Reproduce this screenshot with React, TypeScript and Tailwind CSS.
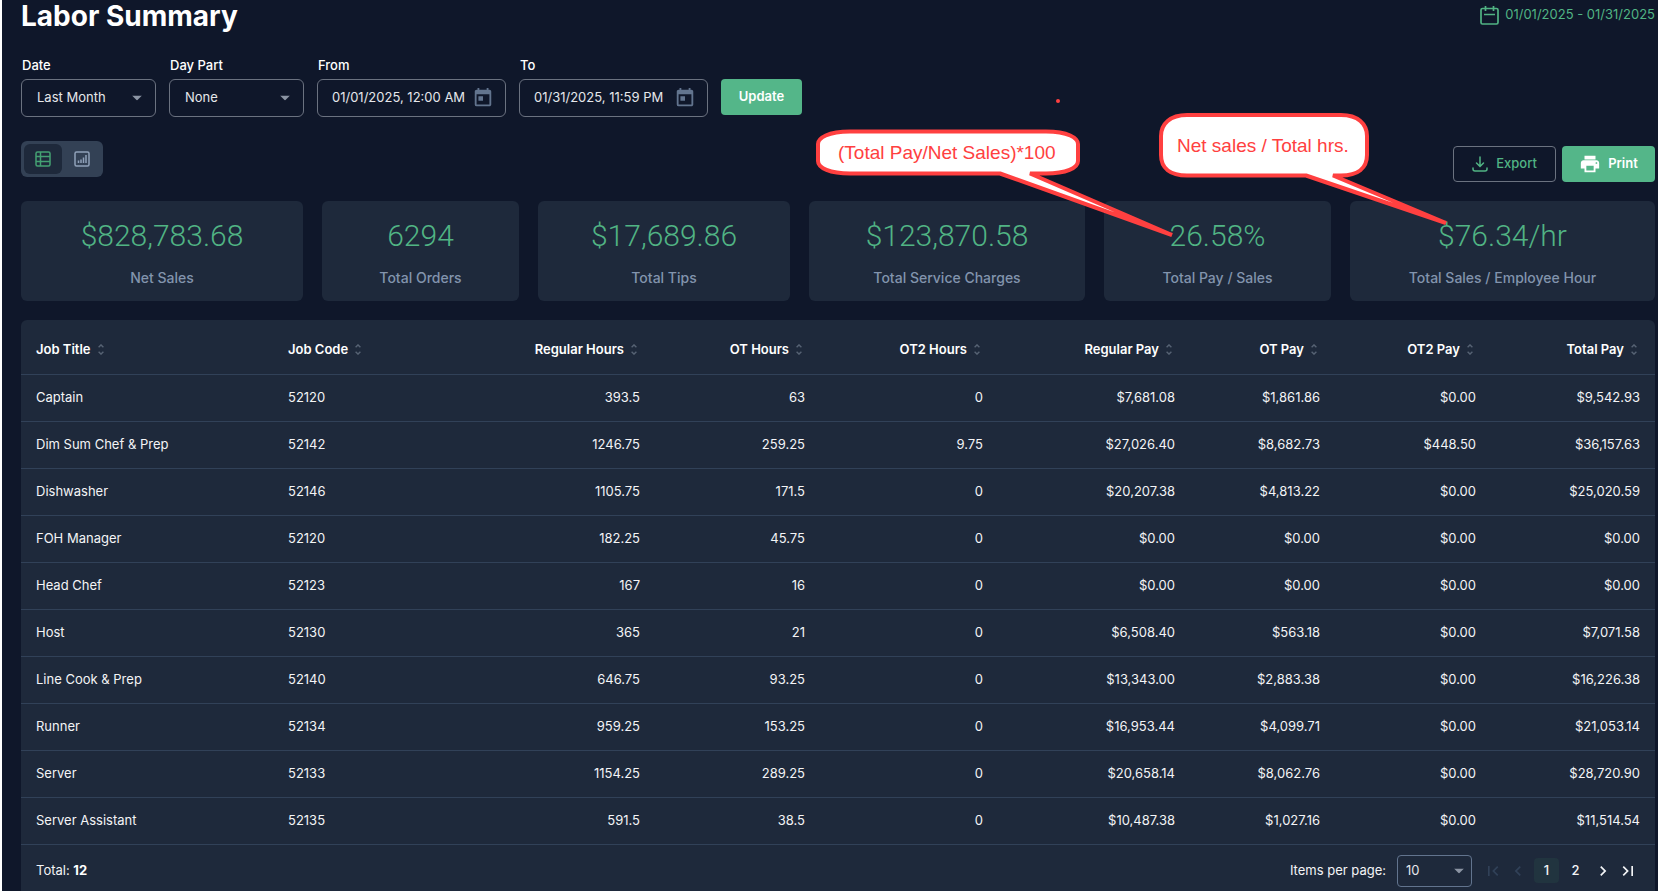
import { useState } from 'react'
import { MdToday, MdPrint, MdChevronLeft, MdChevronRight, MdFirstPage, MdLastPage } from 'react-icons/md'

const STATS = [
  { value: '$828,783.68', label: 'Net Sales' },
  { value: '6294', label: 'Total Orders' },
  { value: '$17,689.86', label: 'Total Tips' },
  { value: '$123,870.58', label: 'Total Service Charges' },
  { value: '26.58%', label: 'Total Pay / Sales' },
  { value: '$76.34/hr', label: 'Total Sales / Employee Hour' },
]

const COLUMNS = [
  { title: 'Job Title', width: 'w-[252px]', numeric: false },
  { title: 'Job Code', width: 'w-[157px]', numeric: false },
  { title: 'Regular Hours', width: 'w-[225px]', numeric: true },
  { title: 'OT Hours', width: 'w-[165px]', numeric: true },
  { title: 'OT2 Hours', width: 'w-[178px]', numeric: true },
  { title: 'Regular Pay', width: 'w-[192px]', numeric: true },
  { title: 'OT Pay', width: 'w-[145px]', numeric: true },
  { title: 'OT2 Pay', width: 'w-[156px]', numeric: true },
  { title: 'Total Pay', width: 'w-[164px]', numeric: true },
]

const ROWS = [
  ['Captain', '52120', '393.5', '63', '0', '$7,681.08', '$1,861.86', '$0.00', '$9,542.93'],
  ['Dim Sum Chef & Prep', '52142', '1246.75', '259.25', '9.75', '$27,026.40', '$8,682.73', '$448.50', '$36,157.63'],
  ['Dishwasher', '52146', '1105.75', '171.5', '0', '$20,207.38', '$4,813.22', '$0.00', '$25,020.59'],
  ['FOH Manager', '52120', '182.25', '45.75', '0', '$0.00', '$0.00', '$0.00', '$0.00'],
  ['Head Chef', '52123', '167', '16', '0', '$0.00', '$0.00', '$0.00', '$0.00'],
  ['Host', '52130', '365', '21', '0', '$6,508.40', '$563.18', '$0.00', '$7,071.58'],
  ['Line Cook & Prep', '52140', '646.75', '93.25', '0', '$13,343.00', '$2,883.38', '$0.00', '$16,226.38'],
  ['Runner', '52134', '959.25', '153.25', '0', '$16,953.44', '$4,099.71', '$0.00', '$21,053.14'],
  ['Server', '52133', '1154.25', '289.25', '0', '$20,658.14', '$8,062.76', '$0.00', '$28,720.90'],
  ['Server Assistant', '52135', '591.5', '38.5', '0', '$10,487.38', '$1,027.16', '$0.00', '$11,514.54'],
]

function Caret({ className }: { className: string }) {
  return (
    <svg viewBox="0 0 10 5" className={`pointer-events-none absolute top-1/2 h-[5px] w-[10px] -translate-y-1/2 fill-[#8b94a3] ${className}`} aria-hidden>
      <path d="M0 0h10L5 5z" />
    </svg>
  )
}

function SelectField({ id, label, options }: { id: string; label: string; options: string[] }) {
  return (
    <div>
      <label htmlFor={id} className="mb-[5px] block pl-px leading-[18px] font-medium text-white">{label}</label>
      <div className="relative">
        <select id={id} className="h-[38px] w-[135px] appearance-none rounded-md border border-[#6b7280] bg-transparent pl-[15px] text-gray-200">
          {options.map((o) => <option key={o}>{o}</option>)}
        </select>
        <Caret className="right-[14px]" />
      </div>
    </div>
  )
}

function DateField({ id, label, initial }: { id: string; label: string; initial: string }) {
  const [value, setValue] = useState(initial)
  return (
    <div>
      <label htmlFor={id} className="mb-[5px] block pl-px leading-[18px] font-medium text-white">{label}</label>
      <div className="flex h-[38px] w-[189px] items-center rounded-md border border-[#6b7280] pr-[11px] pl-[14px]">
        <input
          id={id}
          value={value}
          onChange={(e) => setValue(e.target.value)}
          className="min-w-0 flex-1 bg-transparent text-gray-200 outline-none"
        />
        <button type="button" aria-label={`Pick ${label} date`}>
          <MdToday size={22} className="text-slate-500" />
        </button>
      </div>
    </div>
  )
}

function SortIcon() {
  return (
    <svg viewBox="0 0 6 11" className="h-[11px] w-[6px] fill-none stroke-[#566273]" strokeWidth="1.4" aria-hidden>
      <path d="M.6 3.2 3 .9l2.4 2.3M.6 7.8 3 10.1l2.4-2.3" />
    </svg>
  )
}

// red speech bubbles pinned over the summary cards
function Annotations() {
  return (
    <svg className="pointer-events-none absolute top-0 -left-[2px] h-[260px] w-[1500px]" fill="none" stroke="#ff4040" strokeWidth="4">
      <circle cx="1058" cy="101" r="2" fill="#ff4040" stroke="none" />
      <path
        fill="#fff"
        d="M850 131.500H1046C1068 131.500 1078 138 1078 144V161C1078 168 1066 173.500 1046 173.500H1030L1172 235L1000 173.500H850C830 173.500 818 168 818 161V144C818 138 828 131.500 850 131.500Z"
        strokeLinejoin="bevel"
      />
      <path
        fill="#fff"
        d="M1187 115H1341C1358 115 1367 124 1367 136V155C1367 168 1358 175.500 1341 175.500H1333L1446 223L1306 175.500H1187C1170 175.500 1161 168 1161 155V136C1161 124 1170 115 1187 115Z"
        strokeLinejoin="bevel"
      />
      <g fill="#ff4040" stroke="none" className="font-['Liberation_Sans',Arial,sans-serif] text-[19px]">
        <text x="838" y="159">(Total Pay/Net Sales)*100</text>
        <text x="1177" y="152">Net sales / Total hrs.</text>
      </g>
    </svg>
  )
}

export default function App() {
  const [view, setView] = useState<'table' | 'chart'>('table')

  return (
    <main className="relative flex min-h-screen flex-col border-l-2 border-white bg-[#0f172a] pr-[3px] pl-[19px] font-[Inter,sans-serif] text-[13px] text-gray-100">
      <header className="flex h-8 items-center justify-between">
        <h1 className="text-[28px] leading-8 font-bold text-white">Labor Summary</h1>
        <div className="flex items-center gap-[6px] pb-[2px] text-[#51b484]">
          <svg viewBox="0 0 19 19" className="h-[19px] w-[19px] fill-none stroke-current" strokeWidth="1.700" aria-hidden>
            <rect x="1" y="2.500" width="17" height="15.500" rx="1.500" />
            <path d="M5.500 0v5M13.500 0v5M4 8.500h11" />
          </svg>
          <span>01/01/2025 - 01/31/2025</span>
        </div>
      </header>

      <form className="mt-6 flex items-start gap-[13px]" onSubmit={(e) => e.preventDefault()}>
        <SelectField id="date" label="Date" options={['Last Month', 'This Month']} />
        <SelectField id="day-part" label="Day Part" options={['None', 'Lunch', 'Dinner']} />
        <DateField id="from" label="From" initial="01/01/2025, 12:00 AM" />
        <DateField id="to" label="To" initial="01/31/2025, 11:59 PM" />
        <button type="submit" className="mt-[23px] h-9 w-[81px] rounded bg-[#54b689] font-semibold text-white">Update</button>
      </form>

      <div className="mt-6 flex items-start justify-between">
        <div className="flex h-9 gap-px rounded-md bg-[#334155] p-[3px]">
          <button
            type="button"
            aria-label="Table view"
            onClick={() => setView('table')}
            className={`flex w-[38px] items-center justify-center rounded-md ${view === 'table' ? 'bg-[#1e293b] text-[#44a173]' : 'text-slate-400'}`}
          >
            <svg viewBox="0 0 16 16" className="h-4 w-4 fill-none stroke-current" strokeWidth="1.500" aria-hidden>
              <rect x="1" y="1" width="14" height="14" rx="1.500" />
              <path d="M5.500 1v14M1 5.500h14M1 10.500h14" />
            </svg>
          </button>
          <button
            type="button"
            aria-label="Chart view"
            onClick={() => setView('chart')}
            className={`flex w-[37px] items-center justify-center rounded-md ${view === 'chart' ? 'bg-[#1e293b] text-[#44a173]' : 'text-slate-400'}`}
          >
            <svg viewBox="0 0 16 16" className="h-4 w-4 fill-none stroke-current" strokeWidth="1.500" aria-hidden>
              <rect x="1" y="1" width="14" height="14" rx="1.500" />
              <path d="M4.500 12V9.500M7 12V8.500M9.500 12V6.500M12 12V4" />
            </svg>
          </button>
        </div>
        <div className="flex gap-[6px] pt-[5px] font-medium">
          <button type="button" className="flex h-9 w-[103px] items-center justify-center gap-2 rounded border border-[#6b7280] text-[#51b484]">
            <svg viewBox="0 0 16 16" className="h-4 w-4 fill-none stroke-current" strokeWidth="1.500" strokeLinecap="round" aria-hidden>
              <path d="M8 1v9M4.500 7 8 10.500 11.500 7M1 12v1q0 2 2 2h10q2 0 2-2v-1" />
            </svg>
            Export
          </button>
          <button type="button" className="flex h-9 w-[93px] items-center justify-center gap-[7px] rounded bg-[#54b689] font-semibold text-white">
            <MdPrint size={22} />
            Print
          </button>
        </div>
      </div>

      <section className="mt-[19px] grid grid-cols-[282fr_197fr_252fr_276fr_227fr_305fr] gap-[19px]">
        {STATS.map((s) => (
          <div key={s.label} className="flex h-[100px] flex-col items-center rounded-md bg-[#1e293b] pt-[17px] whitespace-nowrap">
            <p className="font-[Roboto,sans-serif] text-[30px] leading-9 font-light text-[#51b484]">{s.value}</p>
            <p className="mt-[14px] text-sm font-medium text-[#8294ad]">{s.label}</p>
          </div>
        ))}
      </section>

      <section className="mt-[19px] flex-1 rounded-t-md bg-[#1e293b]">
        <table className="w-full table-fixed">
          <colgroup>
            {COLUMNS.map((c) => <col key={c.title} className={c.width} />)}
          </colgroup>
          <thead>
            <tr className="h-[54px] border-b border-slate-700">
              {COLUMNS.map((c) => (
                <th key={c.title} className={`px-[15px] pt-[6px] font-semibold text-white ${c.numeric ? 'text-right' : 'text-left'}`}>
                  <button type="button" className="inline-flex items-center gap-[7px] pr-[3px]">
                    {c.title}
                    <SortIcon />
                  </button>
                </th>
              ))}
            </tr>
          </thead>
          <tbody>
            {ROWS.map((row) => (
              <tr key={row[0]} className="h-[47px] border-b border-slate-700">
                {row.map((cell, i) => (
                  <td key={COLUMNS[i].title} className={`px-[15px] ${COLUMNS[i].numeric ? 'text-right' : 'text-left'}`}>{cell}</td>
                ))}
              </tr>
            ))}
          </tbody>
        </table>

        <footer className="flex h-[46px] items-center justify-between pt-[6px] pr-[15px] pl-[15px]">
          <p>Total: <span className="font-bold text-white">12</span></p>
          <div className="flex items-center">
            <label htmlFor="page-size">Items per page:</label>
            <div className="relative ml-[11px]">
              <select id="page-size" className="block h-8 w-[75px] appearance-none rounded border border-slate-500 bg-transparent pl-2 text-gray-200">
                <option>10</option>
                <option>25</option>
                <option>50</option>
              </select>
              <Caret className="right-2" />
            </div>
            <nav className="ml-2 flex items-center" aria-label="Pagination">
              <button type="button" aria-label="First page" disabled className="flex h-[25px] w-[25px] items-center justify-center text-slate-700"><MdFirstPage size={20} /></button>
              <button type="button" aria-label="Previous page" disabled className="flex h-[25px] w-[25px] items-center justify-center text-slate-700"><MdChevronLeft size={20} /></button>
              <button type="button" aria-current="page" className="ml-1 h-[25px] w-[25px] rounded bg-[#21343f] font-medium">1</button>
              <button type="button" className="ml-1 h-[25px] w-[25px] font-medium">2</button>
              <button type="button" aria-label="Next page" className="ml-[2px] flex h-[25px] w-[25px] items-center justify-center"><MdChevronRight size={20} /></button>
              <button type="button" aria-label="Last page" className="flex h-[25px] w-[25px] items-center justify-center"><MdLastPage size={20} /></button>
            </nav>
          </div>
        </footer>
      </section>

      <Annotations />
    </main>
  )
}
